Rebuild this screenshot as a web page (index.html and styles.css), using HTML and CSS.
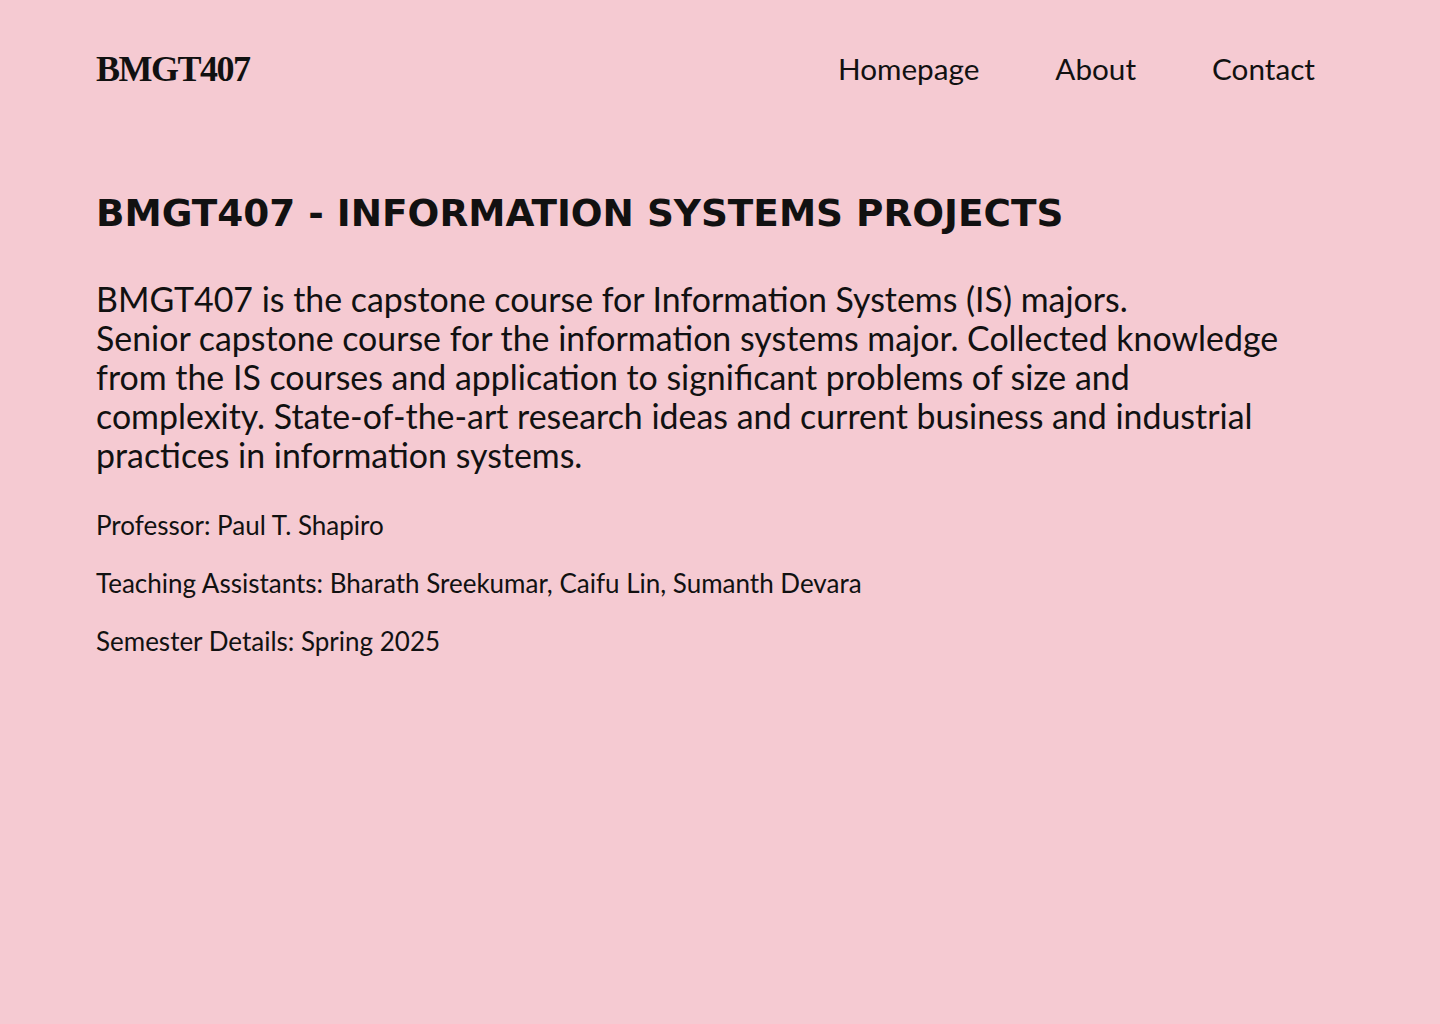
FILE: index.html
```html
<!DOCTYPE html>
<html lang="en">
<head>
<meta charset="utf-8">
<title>BMGT407</title>
<link rel="stylesheet" href="styles.css">
</head>
<body>
<header class="site-header">
  <div class="logo">BMGT407</div>
  <nav class="nav">
    <a href="#" class="nav-link">Homepage</a>
    <a href="#" class="nav-link">About</a>
    <a href="#" class="nav-link">Contact</a>
  </nav>
</header>
<main class="content">
  <h1 class="title">BMGT407 - INFORMATION SYSTEMS PROJECTS</h1>
  <p class="intro">BMGT407 is the capstone course for Information Systems (IS) majors.<br>Senior capstone course for the information systems major. Collected knowledge from the IS courses and application to significant problems of size and complexity. State-of-the-art research ideas and current business and industrial practices in information systems.</p>
  <p class="info info-first">Professor: Paul T. Shapiro</p>
  <p class="info">Teaching Assistants: Bharath Sreekumar, Caifu Lin, Sumanth Devara</p>
  <p class="info">Semester Details: Spring 2025</p>
</main>
</body>
</html>
```
FILE: styles.css
```css
html, body {
  margin: 0;
  padding: 0;
}
body {
  background: #f5cad2;
  color: #111;
  font-family: "Lato", "Liberation Sans", sans-serif;
  min-height: 1024px;
}
.site-header {
  display: flex;
  justify-content: space-between;
  align-items: center;
  padding: 40px 96px 0 96px;
  height: 58px;
}
.logo {
  font-family: "Liberation Serif", serif;
  font-weight: 700;
  font-size: 36px;
  letter-spacing: -1.5px;
  line-height: 58px;
}
.nav {
  display: flex;
  gap: 76px;
  padding-right: 29px;
}
.nav-link {
  color: #111;
  text-decoration: none;
  font-size: 29.7px;
  line-height: 58px;
}
.content {
  padding: 0 96px;
}
.title {
  font-family: "DejaVu Sans", sans-serif;
  font-weight: 700;
  font-size: 37.4px;
  line-height: 46px;
  margin: 92px 0 0 0;
}
.intro {
  font-size: 33.9px;
  line-height: 39px;
  margin: 44px 0 0 0;
  max-width: 1200px;
}
.info {
  font-size: 26px;
  line-height: 29px;
  margin: 29px 0 0 0;
}
.info-first {
  margin-top: 36px;
}
```
